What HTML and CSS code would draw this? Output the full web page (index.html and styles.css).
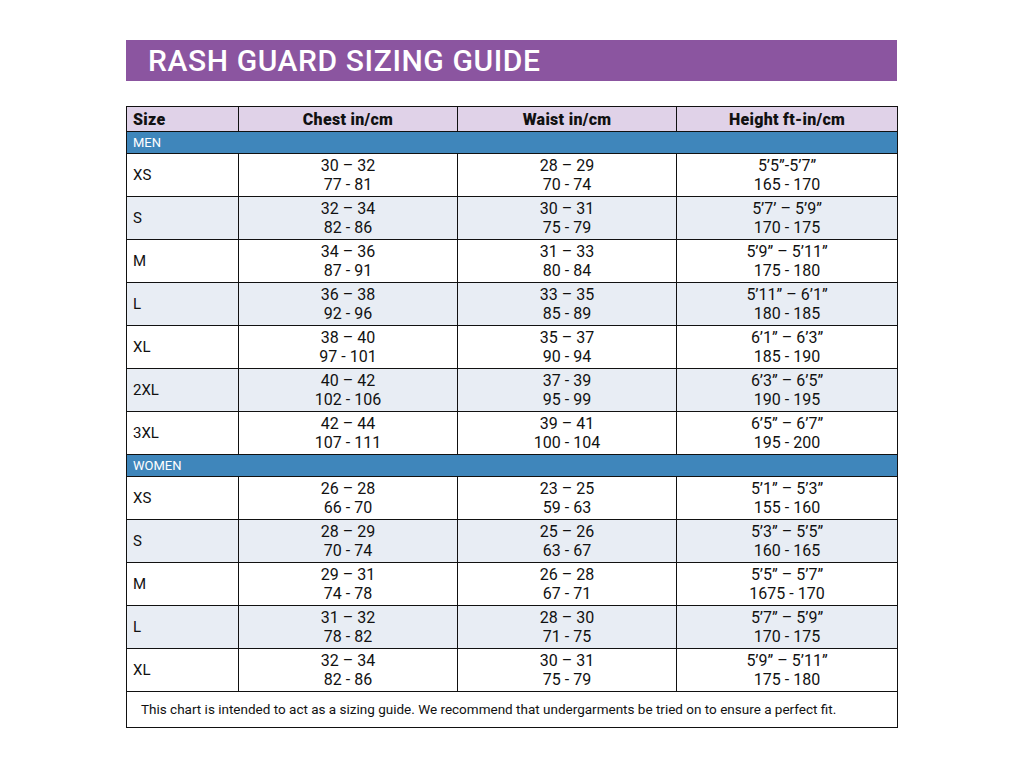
FILE: index.html
```html
<!DOCTYPE html>
<html>
<head>
<meta charset="utf-8">
<link rel="stylesheet" href="styles.css">
</head>
<body>
<div class="page">
  <h1 class="title">RASH GUARD SIZING GUIDE</h1>
  <table class="chart">
    <colgroup>
      <col class="c-size"><col class="c-val"><col class="c-val"><col class="c-h">
    </colgroup>
    <thead>
      <tr class="head"><th class="left">Size</th><th>Chest in/cm</th><th>Waist in/cm</th><th>Height ft-in/cm</th></tr>
    </thead>
    <tbody>
      <tr class="group"><td colspan="4">MEN</td></tr>
      <tr><td class="size">XS</td><td>30 – 32<br>77 - 81</td><td>28 – 29<br>70 - 74</td><td>5’5”-5’7”<br>165 - 170</td></tr>
      <tr class="alt"><td class="size">S</td><td>32 – 34<br>82 - 86</td><td>30 – 31<br>75 - 79</td><td>5’7’ – 5’9”<br>170 - 175</td></tr>
      <tr><td class="size">M</td><td>34 – 36<br>87 - 91</td><td>31 – 33<br>80 - 84</td><td>5’9” – 5’11”<br>175 - 180</td></tr>
      <tr class="alt"><td class="size">L</td><td>36 – 38<br>92 - 96</td><td>33 – 35<br>85 - 89</td><td>5’11” – 6’1”<br>180 - 185</td></tr>
      <tr><td class="size">XL</td><td>38 – 40<br>97 - 101</td><td>35 – 37<br>90 - 94</td><td>6’1” – 6’3”<br>185 - 190</td></tr>
      <tr class="alt"><td class="size">2XL</td><td>40 – 42<br>102 - 106</td><td>37 - 39<br>95 - 99</td><td>6’3” – 6’5”<br>190 - 195</td></tr>
      <tr><td class="size">3XL</td><td>42 – 44<br>107 - 111</td><td>39 – 41<br>100 - 104</td><td>6’5” – 6’7”<br>195 - 200</td></tr>
      <tr class="group"><td colspan="4">WOMEN</td></tr>
      <tr><td class="size">XS</td><td>26 – 28<br>66 - 70</td><td>23 – 25<br>59 - 63</td><td>5’1” – 5’3”<br>155 - 160</td></tr>
      <tr class="alt"><td class="size">S</td><td>28 – 29<br>70 - 74</td><td>25 – 26<br>63 - 67</td><td>5’3” – 5’5”<br>160 - 165</td></tr>
      <tr><td class="size">M</td><td>29 – 31<br>74 - 78</td><td>26 – 28<br>67 - 71</td><td>5’5” – 5’7”<br>1675 - 170</td></tr>
      <tr class="alt"><td class="size">L</td><td>31 – 32<br>78 - 82</td><td>28 – 30<br>71 - 75</td><td>5’7” – 5’9”<br>170 - 175</td></tr>
      <tr><td class="size">XL</td><td>32 – 34<br>82 - 86</td><td>30 – 31<br>75 - 79</td><td>5’9” – 5’11”<br>175 - 180</td></tr>
      <tr class="foot"><td colspan="4">This chart is intended to act as a sizing guide. We recommend that undergarments be tried on to ensure a perfect fit.</td></tr>
    </tbody>
  </table>
</div>
</body>
</html>
```

FILE: styles.css
```css
html, body {
  margin: 0;
  padding: 0;
  background: #ffffff;
}
body {
  font-family: Roboto, "Liberation Sans", sans-serif;
  color: #111;
}
.page {
  width: 771px;
  margin-left: 126px;
  padding-top: 40px;
}
.title {
  margin: 0;
  height: 41px;
  background: #8b55a0;
  color: #ffffff;
  font-size: 30px;
  font-weight: 500;
  line-height: 41px;
  padding-left: 22px;
  letter-spacing: 0.6px;
}
.chart {
  margin-top: 25px;
  width: 771px;
  border-collapse: collapse;
  table-layout: fixed;
  font-size: 16px;
}
.c-size { width: 112px; }
.c-val { width: 219px; }
.c-h { width: 221px; }
.chart th, .chart td {
  border: 1px solid #111;
  padding: 0;
}
.head th {
  background: #e0d2e8;
  height: 24px;
  font-weight: 900;
  font-size: 16px;
  letter-spacing: 0.3px;
  text-align: center;
  color: #111;
}
.head th.left {
  text-align: left;
  padding-left: 6px;
}
.group td {
  background: #3f86bb;
  color: #ffffff;
  font-size: 13px;
  height: 21px;
  padding-left: 6px;
}
.chart tbody tr td {
  text-align: center;
  line-height: 19px;
  height: 42px;
}
.chart tbody tr.group td {
  text-align: left;
  height: 21px;
  line-height: 21px;
}
.chart tbody td.size {
  text-align: left;
  padding-left: 6px;
  font-size: 15px;
}
.alt td {
  background: #e8edf4;
}
.chart tbody tr.foot td {
  text-align: left;
  font-size: 13.5px;
  height: 35px;
  padding-left: 14px;
}
```
